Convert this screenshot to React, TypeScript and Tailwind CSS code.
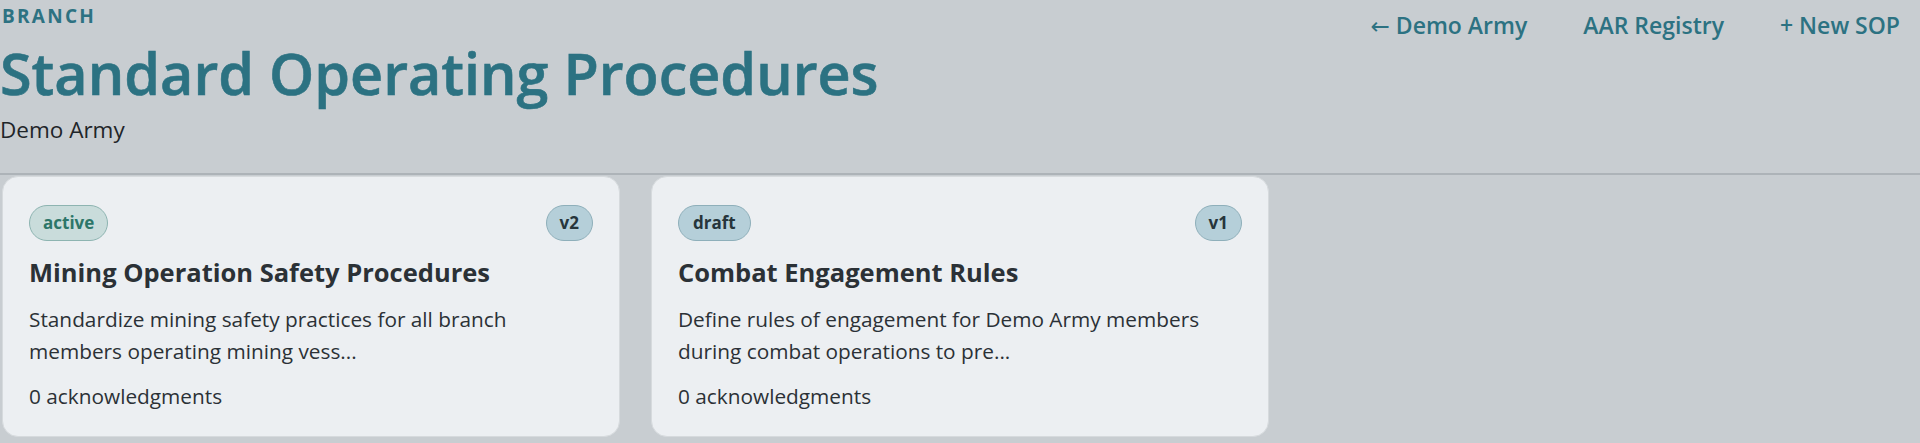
import React from "react";

type Sop = {
  status: "active" | "draft";
  version: string;
  title: string;
  summary: string;
  acks: number;
};

const sops: Sop[] = [
  {
    status: "active",
    version: "v2",
    title: "Mining Operation Safety Procedures",
    summary: "Standardize mining safety practices for all branch members operating mining vess...",
    acks: 0,
  },
  {
    status: "draft",
    version: "v1",
    title: "Combat Engagement Rules",
    summary: "Define rules of engagement for Demo Army members during combat operations to pre...",
    acks: 0,
  },
];

function StatusBadge({ status }: { status: Sop["status"] }) {
  if (status === "active") {
    return (
      <span className="inline-flex h-[36px] items-center rounded-full border border-[#8db4b1] bg-[#c9dcdb] px-[13px] text-[17px] font-bold text-[#2d7669]">
        active
      </span>
    );
  }
  return (
    <span className="inline-flex h-[36px] items-center rounded-full border border-[#8eafba] bg-[#b5cfd9] px-[14px] text-[17px] font-bold text-[#26353b]">
      {status}
    </span>
  );
}

function SopCard({ sop }: { sop: Sop }) {
  return (
    <div className="flex flex-col rounded-[16px] border border-[#d6dadd] bg-[#eceff2] px-[26px] pt-[28px] pb-[25px] text-[#2b3136]">
      <div className="flex items-center justify-between">
        <StatusBadge status={sop.status} />
        <span className="inline-flex h-[36px] items-center rounded-full border border-[#8eafba] bg-[#b5cfd9] px-[13px] text-[17px] font-bold text-[#26353b]">
          {sop.version}
        </span>
      </div>
      <h3 className="mt-[14px] text-[25.5px] leading-[34px] font-bold">{sop.title}</h3>
      <p className="mt-[14px] text-[20.8px] leading-[32px]">{sop.summary}</p>
      <p className="mt-[14px] text-[20.8px] leading-[30px]">{sop.acks} acknowledgments</p>
    </div>
  );
}

export default function App() {
  return (
    <div className="min-h-screen bg-[#c8cdd1] font-['Open_Sans',sans-serif]">
      <header className="flex items-start justify-between border-b-2 border-[#adb3b8] pb-[28px]">
        <div>
          <p className="pl-[2px] pt-[4px] text-[19px] leading-[24px] font-bold tracking-[0.12em] text-[#2d7282]">
            BRANCH
          </p>
          <h1 className="mt-[9px] text-[57.5px] leading-[72px] font-semibold text-[#2c7282] [-webkit-text-stroke:0.6px_#2c7282]">
            Standard Operating Procedures
          </h1>
          <p className="mt-[6px] text-[22.5px] leading-[30px] text-[#1f2529]">Demo Army</p>
        </div>
        <nav className="flex gap-4 pt-[9px] text-[23px] leading-[32px] font-semibold text-[#2c7282]">
          <a href="#" className="px-5">
            <span className="font-['DejaVu_Sans',sans-serif] text-[23px] font-normal">←</span> Demo Army
          </a>
          <a href="#" className="px-5">AAR Registry</a>
          <a href="#" className="px-5">+ New SOP</a>
        </nav>
      </header>
      <div className="grid grid-cols-3 gap-[31px] px-[2px] pt-[1px]">
        {sops.map((sop) => (
          <SopCard key={sop.title} sop={sop} />
        ))}
      </div>
    </div>
  );
}
